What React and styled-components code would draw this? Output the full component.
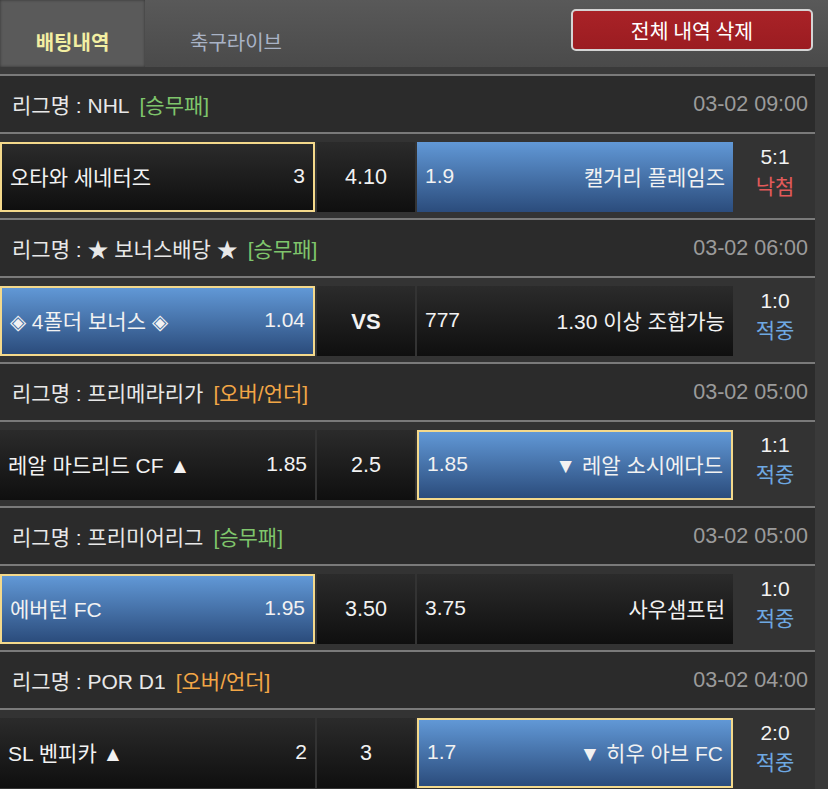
import React from "react";
import styled, { createGlobalStyle } from "styled-components";

const GlobalStyle = createGlobalStyle`
  body {
    margin: 0;
    background: #3a3a3a;
    font-family: "Liberation Sans", "Noto Sans CJK KR", Arial, sans-serif;
  }
`;

const Wrapper = styled.div`
  width: 828px;
  min-height: 789px;
  background: #3a3a3a;
  overflow: hidden;
`;

const TopBar = styled.div`
  height: 67px;
  display: flex;
  align-items: stretch;
  background: linear-gradient(#595959, #4a4a4a);
`;

const Tab = styled.div`
  width: ${(props) => (props.active ? "145px" : "auto")};
  padding: ${(props) => (props.active ? "0" : "0 0 0 45px")};
  display: flex;
  justify-content: center;
  align-items: flex-end;
  padding-bottom: 11px;
  box-sizing: border-box;
  font-size: 20px;
  font-weight: ${(props) => (props.active ? "bold" : "normal")};
  color: ${(props) => (props.active ? "#f3efa2" : "#a9b3c6")};
  background: ${(props) => (props.active ? "#5a5a5a" : "transparent")};
  box-shadow: ${(props) =>
    props.active ? "inset 0 0 3px rgba(0,0,0,0.45)" : "none"};
`;

const Spacer = styled.div`
  flex: 1;
`;

const DeleteButton = styled.button`
  margin: 9px 15px 0 0;
  width: 242px;
  height: 42px;
  border: 2px solid #d4d4d4;
  border-radius: 5px;
  background: linear-gradient(#a92227, #9b1c21);
  color: #fff;
  font-family: "Noto Sans CJK KR", sans-serif;
  font-size: 20.5px;
  padding: 0;
  cursor: pointer;
`;

const List = styled.div`
  width: 815px;
  padding-top: 7px;
`;

const LeagueHeader = styled.div`
  height: 56px;
  border-top: 2px solid #7a7a7a;
  border-bottom: 2px solid #7a7a7a;
  background: #2b2b2b;
  display: flex;
  align-items: center;
  justify-content: space-between;
  padding: 0 7px 0 12px;
  font-size: 21px;
`;

const LeagueName = styled.div`
  color: #e8e8e8;
`;

const GameType = styled.span`
  margin-left: 10px;
  color: ${(props) => (props.type === "ou" ? "#f2a646" : "#7fc56c")};
`;

const DateText = styled.div`
  color: #9b9b9b;
  font-size: 21.5px;
`;

const GameRow = styled.div`
  height: 84px;
  padding: 8px 0 6px;
  box-sizing: border-box;
  background: #333333;
  display: flex;
  gap: 2px;
`;

const Cell = styled.div`
  width: ${(props) => props.w}px;
  flex-shrink: 0;
  box-sizing: border-box;
  display: flex;
  align-items: center;
  justify-content: space-between;
  padding: 0 8px 3px;
  font-size: 21px;
  color: #f2f2f2;
  border: ${(props) => (props.marked ? "2px solid #f4d98b" : "none")};
  background: ${(props) =>
    props.picked
      ? "linear-gradient(#6198d6, #2b4c7c)"
      : "linear-gradient(#2b2b2b, #0f0f0f)"};
`;

const Middle = styled.div`
  width: 98px;
  flex-shrink: 0;
  display: flex;
  align-items: center;
  justify-content: center;
  font-size: ${(props) => (props.vs ? "22px" : "21.5px")};
  font-weight: ${(props) => (props.vs ? "bold" : "normal")};
  color: #f2f2f2;
  background: linear-gradient(#2b2b2b, #0f0f0f);
  padding-top: 1px;
`;

const Result = styled.div`
  flex: 1;
  display: flex;
  flex-direction: column;
  align-items: center;
  justify-content: center;
  padding-bottom: 11px;
  font-size: 21px;
  line-height: 30px;
  color: #f2f2f2;
`;

const Status = styled.div`
  color: ${(props) => (props.win ? "#6ea8e2" : "#e25a5a")};
`;

const games = [
  {
    league: "NHL",
    type: "1x2",
    date: "03-02 09:00",
    home: "오타와 세네터즈",
    homeOdd: "3",
    mid: "4.10",
    awayOdd: "1.9",
    away: "캘거리 플레임즈",
    pick: "away",
    mark: "home",
    score: "5:1",
    win: false,
  },
  {
    league: "★ 보너스배당 ★",
    type: "1x2",
    date: "03-02 06:00",
    home: "◈ 4폴더 보너스 ◈",
    homeOdd: "1.04",
    mid: "VS",
    awayOdd: "777",
    away: "1.30 이상 조합가능",
    pick: "home",
    mark: "home",
    score: "1:0",
    win: true,
  },
  {
    league: "프리메라리가",
    type: "ou",
    date: "03-02 05:00",
    home: "레알 마드리드 CF ▲",
    homeOdd: "1.85",
    mid: "2.5",
    awayOdd: "1.85",
    away: "▼ 레알 소시에다드",
    pick: "away",
    mark: "away",
    score: "1:1",
    win: true,
  },
  {
    league: "프리미어리그",
    type: "1x2",
    date: "03-02 05:00",
    home: "에버턴 FC",
    homeOdd: "1.95",
    mid: "3.50",
    awayOdd: "3.75",
    away: "사우샘프턴",
    pick: "home",
    mark: "home",
    score: "1:0",
    win: true,
  },
  {
    league: "POR D1",
    type: "ou",
    date: "03-02 04:00",
    home: "SL 벤피카 ▲",
    homeOdd: "2",
    mid: "3",
    awayOdd: "1.7",
    away: "▼ 히우 아브 FC",
    pick: "away",
    mark: "away",
    score: "2:0",
    win: true,
  },
];

function App() {
  return (
    <Wrapper>
      <GlobalStyle />
      <TopBar>
        <Tab active>배팅내역</Tab>
        <Tab>축구라이브</Tab>
        <Spacer />
        <DeleteButton>전체 내역 삭제</DeleteButton>
      </TopBar>
      <List>
        {games.map((g, i) => (
          <React.Fragment key={i}>
            <LeagueHeader>
              <LeagueName>
                리그명 : {g.league}
                <GameType type={g.type}>
                  {g.type === "ou" ? "[오버/언더]" : "[승무패]"}
                </GameType>
              </LeagueName>
              <DateText>{g.date}</DateText>
            </LeagueHeader>
            <GameRow>
              <Cell w={315} picked={g.pick === "home"} marked={g.mark === "home"}>
                <span>{g.home}</span>
                <span>{g.homeOdd}</span>
              </Cell>
              <Middle vs={g.mid === "VS"}>{g.mid}</Middle>
              <Cell w={316} picked={g.pick === "away"} marked={g.mark === "away"}>
                <span>{g.awayOdd}</span>
                <span>{g.away}</span>
              </Cell>
              <Result>
                <div>{g.score}</div>
                <Status win={g.win}>{g.win ? "적중" : "낙첨"}</Status>
              </Result>
            </GameRow>
          </React.Fragment>
        ))}
      </List>
    </Wrapper>
  );
}

export default App;
